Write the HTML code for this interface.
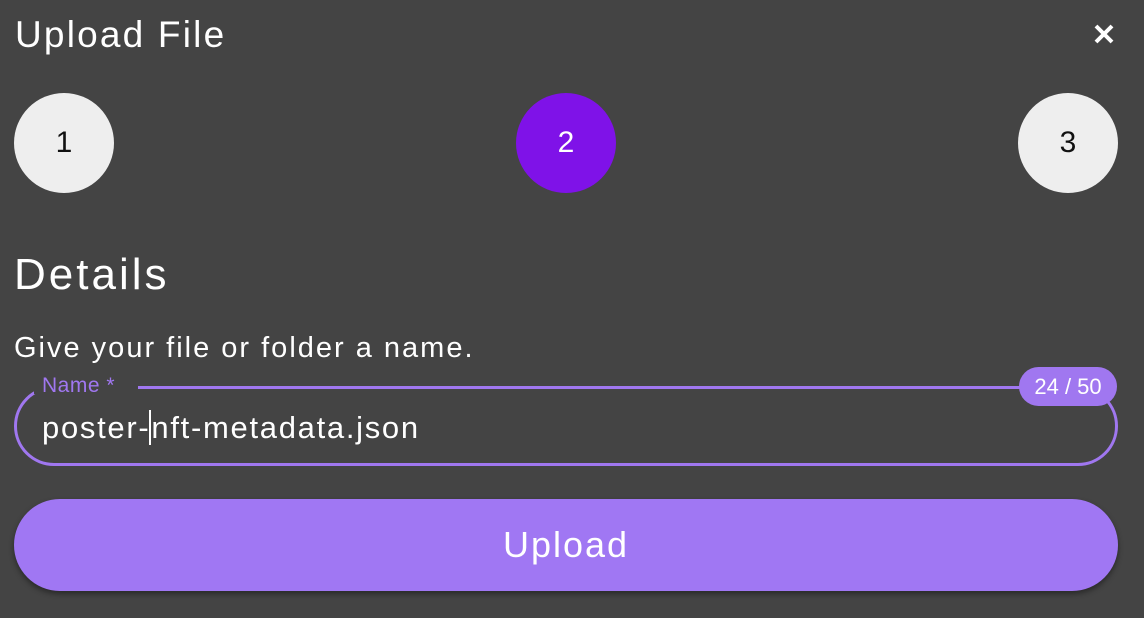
<!DOCTYPE html>
<html><head><style>
*{margin:0;padding:0;box-sizing:border-box}
body{width:1144px;height:618px;background:#444;font-family:"Liberation Sans",sans-serif;color:#fff;position:relative;overflow:hidden}
.a{position:absolute}
.c{position:absolute;top:93px;width:100px;height:100px;border-radius:50%;background:#eee;color:#111;font-size:30px;display:flex;align-items:center;justify-content:center}
</style></head><body>
<div class="a" style="left:15px;top:14px;font-size:37px;letter-spacing:2.2px">Upload File</div>
<svg class="a" style="left:1093px;top:23px" width="22" height="22" viewBox="0 0 22 22"><path d="M3 3L19 19M19 3L3 19" stroke="#fff" stroke-width="4"/></svg>
<div class="c" style="left:14px">1</div>
<div class="c" style="left:516px;background:#7f12e8;color:#fff">2</div>
<div class="c" style="left:1018px">3</div>
<div class="a" style="left:14px;top:250px;font-size:44px;letter-spacing:3px">Details</div>
<div class="a" style="left:14px;top:332px;font-size:29px;letter-spacing:2px">Give your file or folder a name.</div>
<div class="a" style="left:14px;top:386px;width:1104px;height:80px;border:3px solid #a077f0;border-radius:40px"></div>
<div class="a" style="left:34px;top:374px;width:104px;height:20px;background:#444"></div>
<div class="a" style="left:42px;top:374px;font-size:21px;color:#a077f0;letter-spacing:0.5px">Name *</div>
<div class="a" style="left:1019px;top:367px;width:98px;height:39px;border-radius:20px;background:#a077f0;font-size:22px;display:flex;align-items:center;justify-content:center">24 / 50</div>
<div class="a" style="left:42px;top:410px;font-size:31px;letter-spacing:1.7px">poster-<span style="border-left:2px solid #fff;margin-left:-1px"></span>nft-metadata.json</div>
<div class="a" style="left:14px;top:499px;width:1104px;height:92px;border-radius:46px;background:#a077f3;box-shadow:0 3px 6px rgba(0,0,0,.4);font-size:36px;letter-spacing:2px;display:flex;align-items:center;justify-content:center">Upload</div>
</body></html>
